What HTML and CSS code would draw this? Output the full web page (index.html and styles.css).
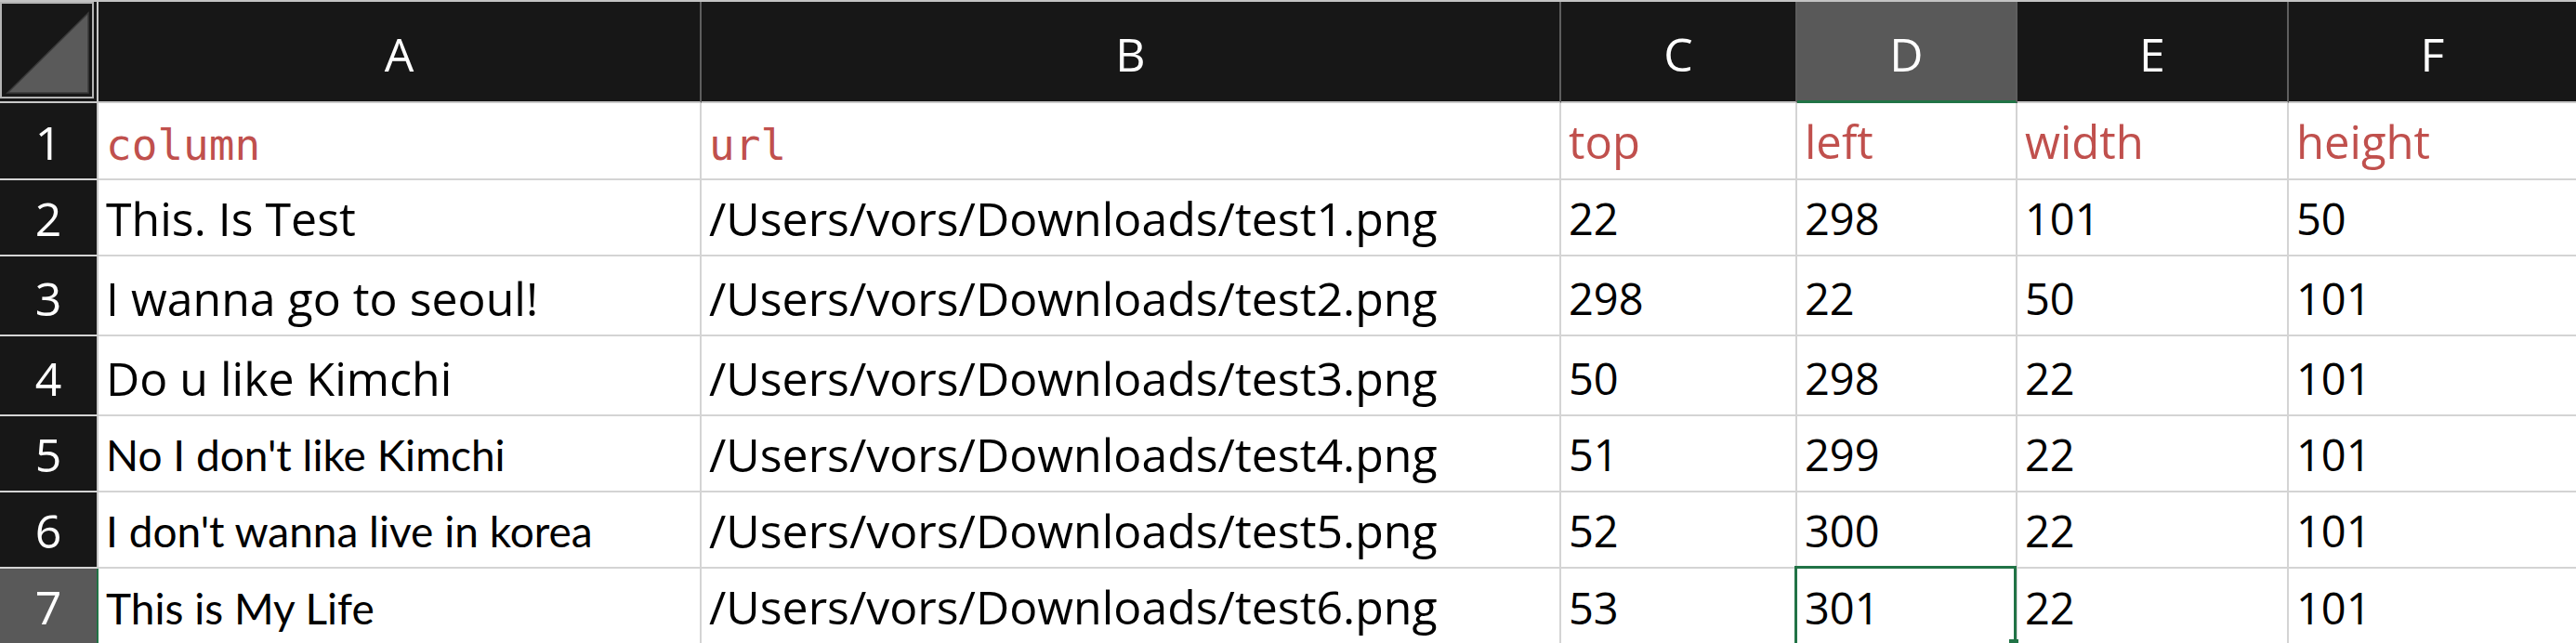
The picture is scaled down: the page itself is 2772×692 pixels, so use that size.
FILE: index.html
```html
<!DOCTYPE html>
<html>
<head>
<meta charset="utf-8">
<link rel="stylesheet" href="styles.css">
</head>
<body>
<div class="sheet">
  <div class="corner">
    <svg class="corner-box" width="101" height="104" viewBox="0 0 101 104">
      <rect x="1" y="1" width="99" height="102" fill="none" stroke="#b4b4b4" stroke-width="2"/>
      <polygon points="8,98 95,12 95,98" fill="#5a5a5a" stroke="#3a3a3a" stroke-width="1.5"/>
    </svg>
  </div>
  <div class="ch">A</div>
  <div class="ch">B</div>
  <div class="ch">C</div>
  <div class="ch ch-sel">D</div>
  <div class="ch">E</div>
  <div class="ch ch-last">F</div>

  <div class="rh">1</div>
  <div class="c mono red">column</div>
  <div class="c mono red">url</div>
  <div class="c hd red">top</div>
  <div class="c hd red">left</div>
  <div class="c hd red">width</div>
  <div class="c hd red last">height</div>

  <div class="rh">2</div>
  <div class="c txt">This. Is Test</div>
  <div class="c txt">/Users/vors/Downloads/test1.png</div>
  <div class="c num">22</div>
  <div class="c num">298</div>
  <div class="c num">101</div>
  <div class="c num last">50</div>

  <div class="rh">3</div>
  <div class="c txt">I wanna go to seoul!</div>
  <div class="c txt">/Users/vors/Downloads/test2.png</div>
  <div class="c num">298</div>
  <div class="c num">22</div>
  <div class="c num">50</div>
  <div class="c num last">101</div>

  <div class="rh">4</div>
  <div class="c txt">Do u like Kimchi</div>
  <div class="c txt">/Users/vors/Downloads/test3.png</div>
  <div class="c num">50</div>
  <div class="c num">298</div>
  <div class="c num">22</div>
  <div class="c num last">101</div>

  <div class="rh">5</div>
  <div class="c alt">No I don't like Kimchi</div>
  <div class="c txt">/Users/vors/Downloads/test4.png</div>
  <div class="c num">51</div>
  <div class="c num">299</div>
  <div class="c num">22</div>
  <div class="c num last">101</div>

  <div class="rh">6</div>
  <div class="c alt">I don't wanna live in korea</div>
  <div class="c txt">/Users/vors/Downloads/test5.png</div>
  <div class="c num">52</div>
  <div class="c num">300</div>
  <div class="c num">22</div>
  <div class="c num last">101</div>

  <div class="rh rh-sel lr">7</div>
  <div class="c alt lr">This is My Life</div>
  <div class="c txt lr">/Users/vors/Downloads/test6.png</div>
  <div class="c num lr">53</div>
  <div class="c num lr active">301</div>
  <div class="c num lr">22</div>
  <div class="c num lr last">101</div>
</div>
</body>
</html>
```

FILE: styles.css
```css
html, body {
  margin: 0;
  padding: 0;
  background: #ffffff;
  height: 692px;
  overflow: hidden;
}

.sheet {
  display: grid;
  grid-template-columns: 106px 649px 925px 254px 237px 292px 1fr;
  grid-template-rows: 109px 83px 82px 86px 86px 82px 82px 90px;
  border-top: 2px solid #c4c4c4;
  width: 2772px;
}

.sheet > div {
  box-sizing: border-box;
}

.corner {
  background: #171717;
  border-right: 2px solid #c8c8c8;
  border-bottom: 2px solid #c8c8c8;
}

.corner-box {
  display: block;
}

.ch {
  background: #171717;
  color: #ffffff;
  font-family: "Open Sans", "Noto Sans", sans-serif;
  font-size: 50px;
  line-height: 1;
  display: flex;
  align-items: flex-end;
  justify-content: center;
  padding-bottom: 26px;
  border-right: 2px solid #5e5e5e;
  border-bottom: 2px solid #c8c8c8;
}

.ch-last {
  border-right: none;
}

.ch-sel {
  background: #595959;
  border-bottom-color: #217346;
  box-shadow: inset 0 -1px 0 #217346;
}

.rh {
  background: #171717;
  color: #ffffff;
  font-family: "Open Sans", "Noto Sans", sans-serif;
  font-size: 50px;
  line-height: 1;
  display: flex;
  align-items: flex-end;
  justify-content: center;
  padding-bottom: 14px;
  border-right: 2px solid #c8c8c8;
  border-bottom: 2px solid #d4d4d4;
}

.rh-sel {
  background: #595959;
  border-right-color: #217346;
}

.c {
  display: flex;
  align-items: flex-end;
  padding-left: 8px;
  line-height: 1;
  white-space: nowrap;
  overflow: visible;
  color: #000000;
  border-right: 2px solid #d4d4d4;
  border-bottom: 2px solid #d4d4d4;
}

.c.last {
  border-right: none;
}

.red {
  color: #c0504d;
}

.mono {
  font-family: "DejaVu Sans Mono", "Liberation Mono", monospace;
  font-size: 46px;
  padding-bottom: 13px;
}

.hd {
  font-family: "Open Sans", "Noto Sans", sans-serif;
  font-size: 49px;
  padding-bottom: 15px;
}

.txt {
  font-family: "Open Sans", "Noto Sans", sans-serif;
  font-size: 50px;
  padding-bottom: 14px;
}

.alt {
  font-family: Lato, "Noto Sans", sans-serif;
  font-size: 46px;
  padding-bottom: 15px;
}

.num {
  font-family: "Open Sans", "Noto Sans", sans-serif;
  font-size: 47px;
  padding-bottom: 15px;
}

.sheet > .lr {
  padding-bottom: 22px;
}

.active {
  position: relative;
}

.active::after {
  content: "";
  position: absolute;
  left: -3px;
  top: -3px;
  right: -1px;
  bottom: -20px;
  border: 3px solid #217346;
}

.active::before {
  content: "";
  position: absolute;
  right: -3px;
  top: 76px;
  width: 10px;
  height: 10px;
  background: #217346;
  z-index: 1;
}
```
